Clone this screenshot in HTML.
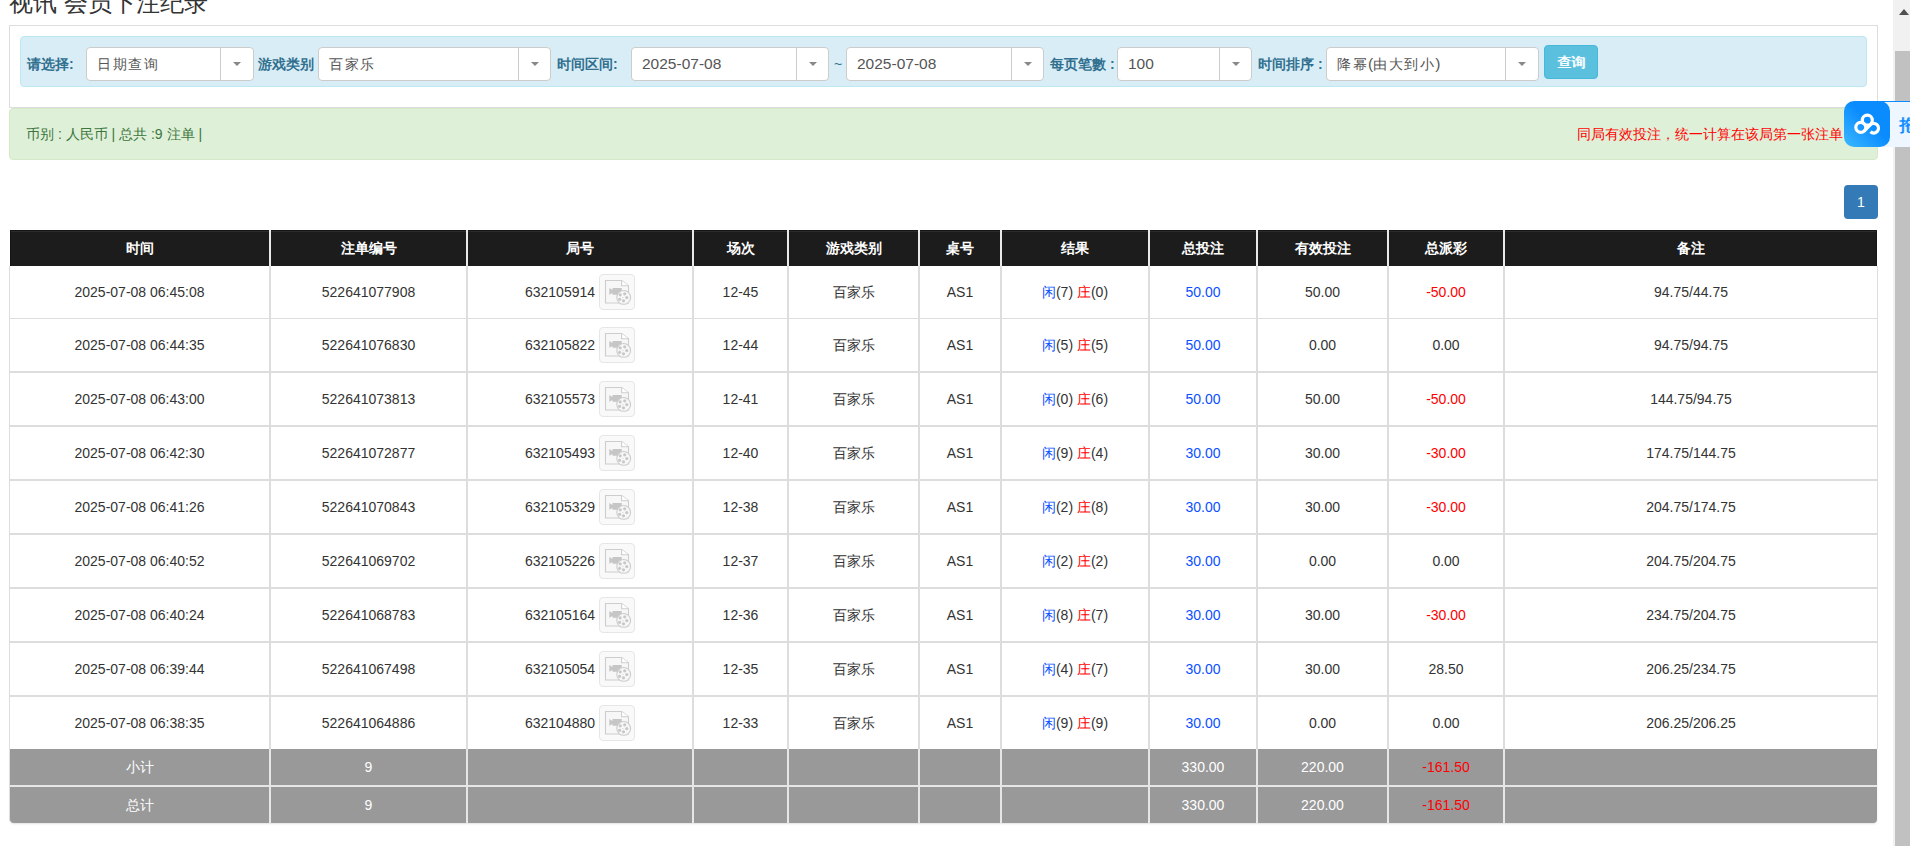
<!DOCTYPE html>
<html><head><meta charset="utf-8"><title>视讯 会员下注纪录</title>
<style>
*{box-sizing:border-box;margin:0;padding:0}
html,body{width:1910px;height:846px;overflow:hidden;background:#fff}
body{position:relative;font-family:"Liberation Sans",sans-serif;font-size:14px;color:#333}
.a{position:absolute}
.t{position:absolute;text-align:center;white-space:nowrap}
.sel{position:absolute;top:47px;height:34px;background:#fff;border:1px solid #ccc;border-radius:4px}
.sel .v{position:absolute;left:10px;top:0;line-height:32px;font-size:15.5px;color:#555;white-space:nowrap}
.cj{font-size:14px;letter-spacing:1.5px}
.sel .d{position:absolute;top:0;bottom:0;width:1px;background:#ccc}
.sel .c{position:absolute;top:14px;width:0;height:0;border-left:4px solid transparent;border-right:4px solid transparent;border-top:4px solid #888}
.lbl{position:absolute;top:47px;line-height:34px;font-weight:bold;color:#31708f;white-space:nowrap}
.hd{color:#fff;font-weight:bold;line-height:36px}
.cell{line-height:52px}
.blue{color:#0a50ff}
.red{color:#f00}
.ft{color:#fff;line-height:36px}
.ico{display:inline-block;vertical-align:middle;width:36px;height:36px;border:1px solid #e6e6e6;border-radius:4px;background:#f9f9f9;margin-left:4px;position:relative;top:-1px}
.ico svg{position:absolute;left:4px;top:4px}
</style></head><body>

<div class="a" style="left:9px;top:-12px;font-size:24px;line-height:30px;color:#333;white-space:nowrap">视讯 会员下注纪录</div>
<div class="a" style="left:9px;top:25px;width:1869px;height:83px;border:1px solid #ddd;border-bottom:none"></div>
<div class="a" style="left:9px;top:107px;width:1869px;height:1px;background:#ddd"></div>
<div class="a" style="left:20px;top:36px;width:1847px;height:51px;background:#d9edf7;border:1px solid #bce8f1;border-radius:4px"></div>
<div class="lbl" style="left:27px">请选择:</div>
<div class="lbl" style="left:258px">游戏类别</div>
<div class="lbl" style="left:557px">时间区间:</div>
<div class="lbl" style="left:834px;font-weight:normal">~</div>
<div class="lbl" style="left:1050px">每页笔數 :</div>
<div class="lbl" style="left:1258px">时间排序 :</div>
<div class="sel" style="left:86px;width:168px"><div class="v"><span class="cj">日期查询</span></div><div class="d" style="left:133px"></div><div class="c" style="left:146.0px"></div></div>
<div class="sel" style="left:318px;width:233px"><div class="v"><span class="cj">百家乐</span></div><div class="d" style="left:199px"></div><div class="c" style="left:211.5px"></div></div>
<div class="sel" style="left:631px;width:198px"><div class="v">2025-07-08</div><div class="d" style="left:164px"></div><div class="c" style="left:176.5px"></div></div>
<div class="sel" style="left:846px;width:198px"><div class="v">2025-07-08</div><div class="d" style="left:164px"></div><div class="c" style="left:176.5px"></div></div>
<div class="sel" style="left:1117px;width:135px"><div class="v">100</div><div class="d" style="left:101px"></div><div class="c" style="left:113.5px"></div></div>
<div class="sel" style="left:1326px;width:213px"><div class="v"><span class="cj">降幂</span>(<span class="cj">由大到小</span>)</div><div class="d" style="left:178px"></div><div class="c" style="left:191.0px"></div></div>
<div class="a" style="left:1544px;top:45px;width:54px;height:34px;background:#5bc0de;border:1px solid #46b8da;border-radius:4px;color:#fff;font-size:14px;text-shadow:0.5px 0 0 #fff;line-height:32px;text-align:center">查询</div>
<div class="a" style="left:9px;top:108px;width:1869px;height:52px;background:#dff0d8;border:1px solid #d6e9c6;border-radius:4px"></div>
<div class="a" style="left:26px;top:108px;line-height:52px;color:#3c763d;white-space:nowrap">币别 : 人民币 | 总共 :9 注单 |</div>
<div class="a" style="left:1500px;width:343px;top:108px;line-height:52px;color:#f00;white-space:nowrap;text-align:right">同局有效投注，统一计算在该局第一张注单</div>
<div class="a" style="left:1844px;top:185px;width:34px;height:34px;background:#337ab7;border-radius:4px;color:#fff;line-height:34px;text-align:center">1</div>
<div class="a" style="left:10px;top:230px;width:1867px;height:36px;background:#1c1c1c;border:1px solid #151515;border-bottom:none;box-shadow:inset 0 1px 0 #2b2b2b;border-top-right-radius:1px"></div>
<div class="a" style="left:269px;top:230px;width:2px;height:36px;background:#e9e9e9"></div>
<div class="a" style="left:466px;top:230px;width:2px;height:36px;background:#e9e9e9"></div>
<div class="a" style="left:692px;top:230px;width:2px;height:36px;background:#e9e9e9"></div>
<div class="a" style="left:787px;top:230px;width:2px;height:36px;background:#e9e9e9"></div>
<div class="a" style="left:918px;top:230px;width:2px;height:36px;background:#e9e9e9"></div>
<div class="a" style="left:1000px;top:230px;width:2px;height:36px;background:#e9e9e9"></div>
<div class="a" style="left:1148px;top:230px;width:2px;height:36px;background:#e9e9e9"></div>
<div class="a" style="left:1256px;top:230px;width:2px;height:36px;background:#e9e9e9"></div>
<div class="a" style="left:1387px;top:230px;width:2px;height:36px;background:#e9e9e9"></div>
<div class="a" style="left:1503px;top:230px;width:2px;height:36px;background:#e9e9e9"></div>
<div class="t hd" style="left:10px;top:230px;width:259px">时间</div>
<div class="t hd" style="left:271px;top:230px;width:195px">注单编号</div>
<div class="t hd" style="left:468px;top:230px;width:224px">局号</div>
<div class="t hd" style="left:694px;top:230px;width:93px">场次</div>
<div class="t hd" style="left:789px;top:230px;width:129px">游戏类别</div>
<div class="t hd" style="left:920px;top:230px;width:80px">桌号</div>
<div class="t hd" style="left:1002px;top:230px;width:146px">结果</div>
<div class="t hd" style="left:1150px;top:230px;width:106px">总投注</div>
<div class="t hd" style="left:1258px;top:230px;width:129px">有效投注</div>
<div class="t hd" style="left:1389px;top:230px;width:114px">总派彩</div>
<div class="t hd" style="left:1505px;top:230px;width:372px">备注</div>
<div class="a" style="left:9px;top:266px;width:1px;height:483px;background:#ddd"></div>
<div class="a" style="left:1877px;top:266px;width:1px;height:483px;background:#ddd"></div>
<div class="a" style="left:269px;top:266px;width:2px;height:483px;background:#ddd"></div>
<div class="a" style="left:466px;top:266px;width:2px;height:483px;background:#ddd"></div>
<div class="a" style="left:692px;top:266px;width:2px;height:483px;background:#ddd"></div>
<div class="a" style="left:787px;top:266px;width:2px;height:483px;background:#ddd"></div>
<div class="a" style="left:918px;top:266px;width:2px;height:483px;background:#ddd"></div>
<div class="a" style="left:1000px;top:266px;width:2px;height:483px;background:#ddd"></div>
<div class="a" style="left:1148px;top:266px;width:2px;height:483px;background:#ddd"></div>
<div class="a" style="left:1256px;top:266px;width:2px;height:483px;background:#ddd"></div>
<div class="a" style="left:1387px;top:266px;width:2px;height:483px;background:#ddd"></div>
<div class="a" style="left:1503px;top:266px;width:2px;height:483px;background:#ddd"></div>
<div class="a" style="left:10px;top:318px;width:1867px;height:1px;background:#ddd"></div>
<div class="a" style="left:10px;top:371px;width:1867px;height:2px;background:#ddd"></div>
<div class="a" style="left:10px;top:425px;width:1867px;height:2px;background:#ddd"></div>
<div class="a" style="left:10px;top:479px;width:1867px;height:2px;background:#ddd"></div>
<div class="a" style="left:10px;top:533px;width:1867px;height:2px;background:#ddd"></div>
<div class="a" style="left:10px;top:587px;width:1867px;height:2px;background:#ddd"></div>
<div class="a" style="left:10px;top:641px;width:1867px;height:2px;background:#ddd"></div>
<div class="a" style="left:10px;top:695px;width:1867px;height:2px;background:#ddd"></div>
<div class="t cell" style="left:10px;top:266px;width:259px">2025-07-08 06:45:08</div>
<div class="t cell" style="left:271px;top:266px;width:195px">522641077908</div>
<div class="t cell" style="left:468px;top:266px;width:224px">632105914<span class="ico"><svg width="28" height="28" viewBox="0 0 28 28"><path d="M1.5 1.5h16.3l6.7 5.3v17.2h-23z" fill="#f7f7f7" stroke="#cdcdcd" stroke-width="1.1"/><path d="M17.6 1.5v5.2h6.9" fill="#fff" stroke="#cdcdcd" stroke-width="1.1"/><path d="M5.3 9.1l3.2 1.8v-1.8h9.3v6.6h-9.3v-1.8l-3.2 1.8z" fill="#c6c6c6"/><circle cx="19.7" cy="18.4" r="6.9" fill="#f7f7f7" stroke="#cdcdcd" stroke-width="1.1"/><circle cx="16.2" cy="15.8" r="1.6" fill="#c8c8c8"/><circle cx="20.7" cy="14.8" r="1.6" fill="#c8c8c8"/><circle cx="22.8" cy="18.6" r="1.6" fill="#c8c8c8"/><circle cx="19.5" cy="21.8" r="1.6" fill="#c8c8c8"/><circle cx="15.6" cy="20.3" r="1.6" fill="#c8c8c8"/><circle cx="18.9" cy="18.5" r="0.6" fill="#cfcfcf"/></svg></span></div>
<div class="t cell" style="left:694px;top:266px;width:93px">12-45</div>
<div class="t cell" style="left:789px;top:266px;width:129px">百家乐</div>
<div class="t cell" style="left:920px;top:266px;width:80px">AS1</div>
<div class="t cell" style="left:1002px;top:266px;width:146px"><span class="blue">闲</span>(7) <span class="red">庄</span>(0)</div>
<div class="t cell" style="left:1150px;top:266px;width:106px"><span class="blue">50.00</span></div>
<div class="t cell" style="left:1258px;top:266px;width:129px">50.00</div>
<div class="t cell" style="left:1389px;top:266px;width:114px"><span class="red">-50.00</span></div>
<div class="t cell" style="left:1505px;top:266px;width:372px">94.75/44.75</div>
<div class="t cell" style="left:10px;top:319px;width:259px">2025-07-08 06:44:35</div>
<div class="t cell" style="left:271px;top:319px;width:195px">522641076830</div>
<div class="t cell" style="left:468px;top:319px;width:224px">632105822<span class="ico"><svg width="28" height="28" viewBox="0 0 28 28"><path d="M1.5 1.5h16.3l6.7 5.3v17.2h-23z" fill="#f7f7f7" stroke="#cdcdcd" stroke-width="1.1"/><path d="M17.6 1.5v5.2h6.9" fill="#fff" stroke="#cdcdcd" stroke-width="1.1"/><path d="M5.3 9.1l3.2 1.8v-1.8h9.3v6.6h-9.3v-1.8l-3.2 1.8z" fill="#c6c6c6"/><circle cx="19.7" cy="18.4" r="6.9" fill="#f7f7f7" stroke="#cdcdcd" stroke-width="1.1"/><circle cx="16.2" cy="15.8" r="1.6" fill="#c8c8c8"/><circle cx="20.7" cy="14.8" r="1.6" fill="#c8c8c8"/><circle cx="22.8" cy="18.6" r="1.6" fill="#c8c8c8"/><circle cx="19.5" cy="21.8" r="1.6" fill="#c8c8c8"/><circle cx="15.6" cy="20.3" r="1.6" fill="#c8c8c8"/><circle cx="18.9" cy="18.5" r="0.6" fill="#cfcfcf"/></svg></span></div>
<div class="t cell" style="left:694px;top:319px;width:93px">12-44</div>
<div class="t cell" style="left:789px;top:319px;width:129px">百家乐</div>
<div class="t cell" style="left:920px;top:319px;width:80px">AS1</div>
<div class="t cell" style="left:1002px;top:319px;width:146px"><span class="blue">闲</span>(5) <span class="red">庄</span>(5)</div>
<div class="t cell" style="left:1150px;top:319px;width:106px"><span class="blue">50.00</span></div>
<div class="t cell" style="left:1258px;top:319px;width:129px">0.00</div>
<div class="t cell" style="left:1389px;top:319px;width:114px">0.00</div>
<div class="t cell" style="left:1505px;top:319px;width:372px">94.75/94.75</div>
<div class="t cell" style="left:10px;top:373px;width:259px">2025-07-08 06:43:00</div>
<div class="t cell" style="left:271px;top:373px;width:195px">522641073813</div>
<div class="t cell" style="left:468px;top:373px;width:224px">632105573<span class="ico"><svg width="28" height="28" viewBox="0 0 28 28"><path d="M1.5 1.5h16.3l6.7 5.3v17.2h-23z" fill="#f7f7f7" stroke="#cdcdcd" stroke-width="1.1"/><path d="M17.6 1.5v5.2h6.9" fill="#fff" stroke="#cdcdcd" stroke-width="1.1"/><path d="M5.3 9.1l3.2 1.8v-1.8h9.3v6.6h-9.3v-1.8l-3.2 1.8z" fill="#c6c6c6"/><circle cx="19.7" cy="18.4" r="6.9" fill="#f7f7f7" stroke="#cdcdcd" stroke-width="1.1"/><circle cx="16.2" cy="15.8" r="1.6" fill="#c8c8c8"/><circle cx="20.7" cy="14.8" r="1.6" fill="#c8c8c8"/><circle cx="22.8" cy="18.6" r="1.6" fill="#c8c8c8"/><circle cx="19.5" cy="21.8" r="1.6" fill="#c8c8c8"/><circle cx="15.6" cy="20.3" r="1.6" fill="#c8c8c8"/><circle cx="18.9" cy="18.5" r="0.6" fill="#cfcfcf"/></svg></span></div>
<div class="t cell" style="left:694px;top:373px;width:93px">12-41</div>
<div class="t cell" style="left:789px;top:373px;width:129px">百家乐</div>
<div class="t cell" style="left:920px;top:373px;width:80px">AS1</div>
<div class="t cell" style="left:1002px;top:373px;width:146px"><span class="blue">闲</span>(0) <span class="red">庄</span>(6)</div>
<div class="t cell" style="left:1150px;top:373px;width:106px"><span class="blue">50.00</span></div>
<div class="t cell" style="left:1258px;top:373px;width:129px">50.00</div>
<div class="t cell" style="left:1389px;top:373px;width:114px"><span class="red">-50.00</span></div>
<div class="t cell" style="left:1505px;top:373px;width:372px">144.75/94.75</div>
<div class="t cell" style="left:10px;top:427px;width:259px">2025-07-08 06:42:30</div>
<div class="t cell" style="left:271px;top:427px;width:195px">522641072877</div>
<div class="t cell" style="left:468px;top:427px;width:224px">632105493<span class="ico"><svg width="28" height="28" viewBox="0 0 28 28"><path d="M1.5 1.5h16.3l6.7 5.3v17.2h-23z" fill="#f7f7f7" stroke="#cdcdcd" stroke-width="1.1"/><path d="M17.6 1.5v5.2h6.9" fill="#fff" stroke="#cdcdcd" stroke-width="1.1"/><path d="M5.3 9.1l3.2 1.8v-1.8h9.3v6.6h-9.3v-1.8l-3.2 1.8z" fill="#c6c6c6"/><circle cx="19.7" cy="18.4" r="6.9" fill="#f7f7f7" stroke="#cdcdcd" stroke-width="1.1"/><circle cx="16.2" cy="15.8" r="1.6" fill="#c8c8c8"/><circle cx="20.7" cy="14.8" r="1.6" fill="#c8c8c8"/><circle cx="22.8" cy="18.6" r="1.6" fill="#c8c8c8"/><circle cx="19.5" cy="21.8" r="1.6" fill="#c8c8c8"/><circle cx="15.6" cy="20.3" r="1.6" fill="#c8c8c8"/><circle cx="18.9" cy="18.5" r="0.6" fill="#cfcfcf"/></svg></span></div>
<div class="t cell" style="left:694px;top:427px;width:93px">12-40</div>
<div class="t cell" style="left:789px;top:427px;width:129px">百家乐</div>
<div class="t cell" style="left:920px;top:427px;width:80px">AS1</div>
<div class="t cell" style="left:1002px;top:427px;width:146px"><span class="blue">闲</span>(9) <span class="red">庄</span>(4)</div>
<div class="t cell" style="left:1150px;top:427px;width:106px"><span class="blue">30.00</span></div>
<div class="t cell" style="left:1258px;top:427px;width:129px">30.00</div>
<div class="t cell" style="left:1389px;top:427px;width:114px"><span class="red">-30.00</span></div>
<div class="t cell" style="left:1505px;top:427px;width:372px">174.75/144.75</div>
<div class="t cell" style="left:10px;top:481px;width:259px">2025-07-08 06:41:26</div>
<div class="t cell" style="left:271px;top:481px;width:195px">522641070843</div>
<div class="t cell" style="left:468px;top:481px;width:224px">632105329<span class="ico"><svg width="28" height="28" viewBox="0 0 28 28"><path d="M1.5 1.5h16.3l6.7 5.3v17.2h-23z" fill="#f7f7f7" stroke="#cdcdcd" stroke-width="1.1"/><path d="M17.6 1.5v5.2h6.9" fill="#fff" stroke="#cdcdcd" stroke-width="1.1"/><path d="M5.3 9.1l3.2 1.8v-1.8h9.3v6.6h-9.3v-1.8l-3.2 1.8z" fill="#c6c6c6"/><circle cx="19.7" cy="18.4" r="6.9" fill="#f7f7f7" stroke="#cdcdcd" stroke-width="1.1"/><circle cx="16.2" cy="15.8" r="1.6" fill="#c8c8c8"/><circle cx="20.7" cy="14.8" r="1.6" fill="#c8c8c8"/><circle cx="22.8" cy="18.6" r="1.6" fill="#c8c8c8"/><circle cx="19.5" cy="21.8" r="1.6" fill="#c8c8c8"/><circle cx="15.6" cy="20.3" r="1.6" fill="#c8c8c8"/><circle cx="18.9" cy="18.5" r="0.6" fill="#cfcfcf"/></svg></span></div>
<div class="t cell" style="left:694px;top:481px;width:93px">12-38</div>
<div class="t cell" style="left:789px;top:481px;width:129px">百家乐</div>
<div class="t cell" style="left:920px;top:481px;width:80px">AS1</div>
<div class="t cell" style="left:1002px;top:481px;width:146px"><span class="blue">闲</span>(2) <span class="red">庄</span>(8)</div>
<div class="t cell" style="left:1150px;top:481px;width:106px"><span class="blue">30.00</span></div>
<div class="t cell" style="left:1258px;top:481px;width:129px">30.00</div>
<div class="t cell" style="left:1389px;top:481px;width:114px"><span class="red">-30.00</span></div>
<div class="t cell" style="left:1505px;top:481px;width:372px">204.75/174.75</div>
<div class="t cell" style="left:10px;top:535px;width:259px">2025-07-08 06:40:52</div>
<div class="t cell" style="left:271px;top:535px;width:195px">522641069702</div>
<div class="t cell" style="left:468px;top:535px;width:224px">632105226<span class="ico"><svg width="28" height="28" viewBox="0 0 28 28"><path d="M1.5 1.5h16.3l6.7 5.3v17.2h-23z" fill="#f7f7f7" stroke="#cdcdcd" stroke-width="1.1"/><path d="M17.6 1.5v5.2h6.9" fill="#fff" stroke="#cdcdcd" stroke-width="1.1"/><path d="M5.3 9.1l3.2 1.8v-1.8h9.3v6.6h-9.3v-1.8l-3.2 1.8z" fill="#c6c6c6"/><circle cx="19.7" cy="18.4" r="6.9" fill="#f7f7f7" stroke="#cdcdcd" stroke-width="1.1"/><circle cx="16.2" cy="15.8" r="1.6" fill="#c8c8c8"/><circle cx="20.7" cy="14.8" r="1.6" fill="#c8c8c8"/><circle cx="22.8" cy="18.6" r="1.6" fill="#c8c8c8"/><circle cx="19.5" cy="21.8" r="1.6" fill="#c8c8c8"/><circle cx="15.6" cy="20.3" r="1.6" fill="#c8c8c8"/><circle cx="18.9" cy="18.5" r="0.6" fill="#cfcfcf"/></svg></span></div>
<div class="t cell" style="left:694px;top:535px;width:93px">12-37</div>
<div class="t cell" style="left:789px;top:535px;width:129px">百家乐</div>
<div class="t cell" style="left:920px;top:535px;width:80px">AS1</div>
<div class="t cell" style="left:1002px;top:535px;width:146px"><span class="blue">闲</span>(2) <span class="red">庄</span>(2)</div>
<div class="t cell" style="left:1150px;top:535px;width:106px"><span class="blue">30.00</span></div>
<div class="t cell" style="left:1258px;top:535px;width:129px">0.00</div>
<div class="t cell" style="left:1389px;top:535px;width:114px">0.00</div>
<div class="t cell" style="left:1505px;top:535px;width:372px">204.75/204.75</div>
<div class="t cell" style="left:10px;top:589px;width:259px">2025-07-08 06:40:24</div>
<div class="t cell" style="left:271px;top:589px;width:195px">522641068783</div>
<div class="t cell" style="left:468px;top:589px;width:224px">632105164<span class="ico"><svg width="28" height="28" viewBox="0 0 28 28"><path d="M1.5 1.5h16.3l6.7 5.3v17.2h-23z" fill="#f7f7f7" stroke="#cdcdcd" stroke-width="1.1"/><path d="M17.6 1.5v5.2h6.9" fill="#fff" stroke="#cdcdcd" stroke-width="1.1"/><path d="M5.3 9.1l3.2 1.8v-1.8h9.3v6.6h-9.3v-1.8l-3.2 1.8z" fill="#c6c6c6"/><circle cx="19.7" cy="18.4" r="6.9" fill="#f7f7f7" stroke="#cdcdcd" stroke-width="1.1"/><circle cx="16.2" cy="15.8" r="1.6" fill="#c8c8c8"/><circle cx="20.7" cy="14.8" r="1.6" fill="#c8c8c8"/><circle cx="22.8" cy="18.6" r="1.6" fill="#c8c8c8"/><circle cx="19.5" cy="21.8" r="1.6" fill="#c8c8c8"/><circle cx="15.6" cy="20.3" r="1.6" fill="#c8c8c8"/><circle cx="18.9" cy="18.5" r="0.6" fill="#cfcfcf"/></svg></span></div>
<div class="t cell" style="left:694px;top:589px;width:93px">12-36</div>
<div class="t cell" style="left:789px;top:589px;width:129px">百家乐</div>
<div class="t cell" style="left:920px;top:589px;width:80px">AS1</div>
<div class="t cell" style="left:1002px;top:589px;width:146px"><span class="blue">闲</span>(8) <span class="red">庄</span>(7)</div>
<div class="t cell" style="left:1150px;top:589px;width:106px"><span class="blue">30.00</span></div>
<div class="t cell" style="left:1258px;top:589px;width:129px">30.00</div>
<div class="t cell" style="left:1389px;top:589px;width:114px"><span class="red">-30.00</span></div>
<div class="t cell" style="left:1505px;top:589px;width:372px">234.75/204.75</div>
<div class="t cell" style="left:10px;top:643px;width:259px">2025-07-08 06:39:44</div>
<div class="t cell" style="left:271px;top:643px;width:195px">522641067498</div>
<div class="t cell" style="left:468px;top:643px;width:224px">632105054<span class="ico"><svg width="28" height="28" viewBox="0 0 28 28"><path d="M1.5 1.5h16.3l6.7 5.3v17.2h-23z" fill="#f7f7f7" stroke="#cdcdcd" stroke-width="1.1"/><path d="M17.6 1.5v5.2h6.9" fill="#fff" stroke="#cdcdcd" stroke-width="1.1"/><path d="M5.3 9.1l3.2 1.8v-1.8h9.3v6.6h-9.3v-1.8l-3.2 1.8z" fill="#c6c6c6"/><circle cx="19.7" cy="18.4" r="6.9" fill="#f7f7f7" stroke="#cdcdcd" stroke-width="1.1"/><circle cx="16.2" cy="15.8" r="1.6" fill="#c8c8c8"/><circle cx="20.7" cy="14.8" r="1.6" fill="#c8c8c8"/><circle cx="22.8" cy="18.6" r="1.6" fill="#c8c8c8"/><circle cx="19.5" cy="21.8" r="1.6" fill="#c8c8c8"/><circle cx="15.6" cy="20.3" r="1.6" fill="#c8c8c8"/><circle cx="18.9" cy="18.5" r="0.6" fill="#cfcfcf"/></svg></span></div>
<div class="t cell" style="left:694px;top:643px;width:93px">12-35</div>
<div class="t cell" style="left:789px;top:643px;width:129px">百家乐</div>
<div class="t cell" style="left:920px;top:643px;width:80px">AS1</div>
<div class="t cell" style="left:1002px;top:643px;width:146px"><span class="blue">闲</span>(4) <span class="red">庄</span>(7)</div>
<div class="t cell" style="left:1150px;top:643px;width:106px"><span class="blue">30.00</span></div>
<div class="t cell" style="left:1258px;top:643px;width:129px">30.00</div>
<div class="t cell" style="left:1389px;top:643px;width:114px">28.50</div>
<div class="t cell" style="left:1505px;top:643px;width:372px">206.25/234.75</div>
<div class="t cell" style="left:10px;top:697px;width:259px">2025-07-08 06:38:35</div>
<div class="t cell" style="left:271px;top:697px;width:195px">522641064886</div>
<div class="t cell" style="left:468px;top:697px;width:224px">632104880<span class="ico"><svg width="28" height="28" viewBox="0 0 28 28"><path d="M1.5 1.5h16.3l6.7 5.3v17.2h-23z" fill="#f7f7f7" stroke="#cdcdcd" stroke-width="1.1"/><path d="M17.6 1.5v5.2h6.9" fill="#fff" stroke="#cdcdcd" stroke-width="1.1"/><path d="M5.3 9.1l3.2 1.8v-1.8h9.3v6.6h-9.3v-1.8l-3.2 1.8z" fill="#c6c6c6"/><circle cx="19.7" cy="18.4" r="6.9" fill="#f7f7f7" stroke="#cdcdcd" stroke-width="1.1"/><circle cx="16.2" cy="15.8" r="1.6" fill="#c8c8c8"/><circle cx="20.7" cy="14.8" r="1.6" fill="#c8c8c8"/><circle cx="22.8" cy="18.6" r="1.6" fill="#c8c8c8"/><circle cx="19.5" cy="21.8" r="1.6" fill="#c8c8c8"/><circle cx="15.6" cy="20.3" r="1.6" fill="#c8c8c8"/><circle cx="18.9" cy="18.5" r="0.6" fill="#cfcfcf"/></svg></span></div>
<div class="t cell" style="left:694px;top:697px;width:93px">12-33</div>
<div class="t cell" style="left:789px;top:697px;width:129px">百家乐</div>
<div class="t cell" style="left:920px;top:697px;width:80px">AS1</div>
<div class="t cell" style="left:1002px;top:697px;width:146px"><span class="blue">闲</span>(9) <span class="red">庄</span>(9)</div>
<div class="t cell" style="left:1150px;top:697px;width:106px"><span class="blue">30.00</span></div>
<div class="t cell" style="left:1258px;top:697px;width:129px">0.00</div>
<div class="t cell" style="left:1389px;top:697px;width:114px">0.00</div>
<div class="t cell" style="left:1505px;top:697px;width:372px">206.25/206.25</div>
<div class="a" style="left:10px;top:749px;width:1867px;height:36px;background:#999"></div>
<div class="a" style="left:10px;top:787px;width:1867px;height:36px;background:#999;border-bottom-left-radius:4px;border-bottom-right-radius:4px"></div>
<div class="a" style="left:9px;top:749px;width:1px;height:72px;background:#e6e6e6"></div>
<div class="a" style="left:9px;top:785px;width:1868px;height:2px;background:#e6e6e6"></div>
<div class="a" style="left:10px;top:749px;width:1867px;height:74px;border-bottom-left-radius:3px;border-bottom-right-radius:3px;border-bottom-left-radius:4px;border-bottom-right-radius:4px;box-shadow:0 1px 2px rgba(0,0,0,.12)"></div>
<div class="a" style="left:269px;top:749px;width:2px;height:74px;background:#e6e6e6"></div>
<div class="a" style="left:466px;top:749px;width:2px;height:74px;background:#e6e6e6"></div>
<div class="a" style="left:692px;top:749px;width:2px;height:74px;background:#e6e6e6"></div>
<div class="a" style="left:787px;top:749px;width:2px;height:74px;background:#e6e6e6"></div>
<div class="a" style="left:918px;top:749px;width:2px;height:74px;background:#e6e6e6"></div>
<div class="a" style="left:1000px;top:749px;width:2px;height:74px;background:#e6e6e6"></div>
<div class="a" style="left:1148px;top:749px;width:2px;height:74px;background:#e6e6e6"></div>
<div class="a" style="left:1256px;top:749px;width:2px;height:74px;background:#e6e6e6"></div>
<div class="a" style="left:1387px;top:749px;width:2px;height:74px;background:#e6e6e6"></div>
<div class="a" style="left:1503px;top:749px;width:2px;height:74px;background:#e6e6e6"></div>
<div class="t ft" style="left:10px;top:749px;width:259px">小计</div>
<div class="t ft" style="left:271px;top:749px;width:195px">9</div>
<div class="t ft" style="left:1150px;top:749px;width:106px">330.00</div>
<div class="t ft" style="left:1258px;top:749px;width:129px">220.00</div>
<div class="t ft" style="left:1389px;top:749px;width:114px"><span class="red">-161.50</span></div>
<div class="t ft" style="left:10px;top:787px;width:259px">总计</div>
<div class="t ft" style="left:271px;top:787px;width:195px">9</div>
<div class="t ft" style="left:1150px;top:787px;width:106px">330.00</div>
<div class="t ft" style="left:1258px;top:787px;width:129px">220.00</div>
<div class="t ft" style="left:1389px;top:787px;width:114px"><span class="red">-161.50</span></div>
<div class="a" style="left:1893px;top:0;width:17px;height:846px;background:#f1f1f1"></div>
<div class="a" style="left:1895px;top:51px;width:15px;height:795px;background:#c1c1c1"></div>
<div class="a" style="left:1899px;top:9px;width:0;height:0;border-left:5px solid transparent;border-right:5px solid transparent;border-bottom:6px solid #505050"></div>
<div class="a" style="left:1866px;top:101px;width:44px;height:46px;background:#eef7ff;border-top:1px solid #0a8cff"></div>
<div class="a" style="left:1899px;top:103px;line-height:46px;font-size:17px;text-shadow:0.5px 0 0 #0a8cff;color:#0a8cff;white-space:nowrap">拖</div>
<div class="a" style="left:1844px;top:101px;width:46px;height:46px;border-radius:10px;background:linear-gradient(45deg,#3cb8ff 0%,#0a8cff 55%,#0a8cff 100%)"><svg width="46" height="46" viewBox="0 0 46 46" style="position:absolute;left:0;top:0"><g fill="none" stroke="#fff" stroke-width="3.2"><circle cx="23.3" cy="19.2" r="5"/><circle cx="16.8" cy="26.3" r="5"/><path d="M19.8 30.3 L26 24.2 A4.8 4.8 0 1 1 26.5 30.8"/></g></svg></div>
</body></html>
